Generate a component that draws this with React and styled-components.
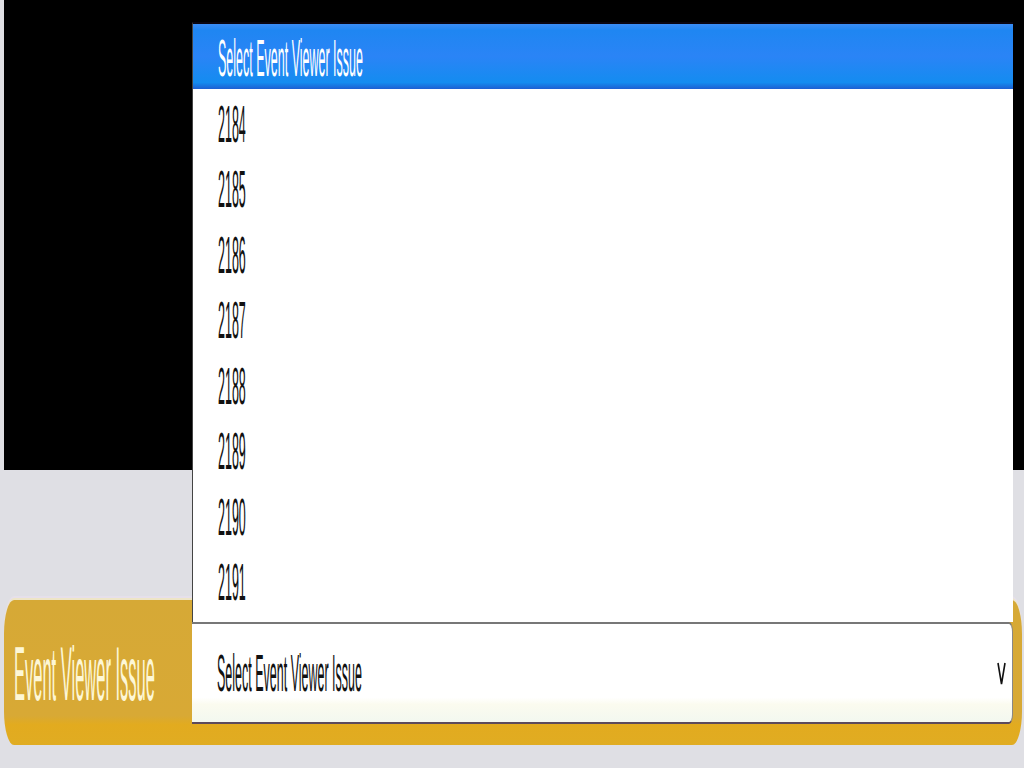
import React from 'react';
import styled, { createGlobalStyle } from 'styled-components';

const options = ['2184', '2185', '2186', '2187', '2188', '2189', '2190', '2191'];

const GlobalStyle = createGlobalStyle`
  html, body {
    margin: 0;
    padding: 0;
    background: #dfdfe4;
    font-family: "Liberation Sans", Arial, sans-serif;
  }
`;

const Page = styled.div`
  width: 1024px;
  height: 768px;
  overflow: hidden;
  background: #dfdfe4;
`;

const Screen = styled.div`
  height: 470px;
  margin-left: 4px;
  background: #000;
`;

const FieldBar = styled.div`
  display: flex;
  align-items: center;
  height: 145px;
  margin: 130px 2px 0 4px;
  background: linear-gradient(#d6a936 0%, #d8a935 80%, #e2ab1f 86%, #e0ac22 100%);
  border-radius: 10px / 34px;
  box-shadow: 0 -2px 0 #eee5c6, 0 -4px 0 #e6e0ea;
`;

const Label = styled.div`
  width: 188px;
  flex-shrink: 0;
  box-sizing: border-box;
  padding: 4px 0 0 10px;
  color: #fdf7d6;
  font-size: 16.5px;
  white-space: nowrap;
`;

const Stretch = styled.span`
  display: inline-block;
  transform: scaleY(${(p) => p.$scale || 4.2});
  transform-origin: center;
  white-space: nowrap;
`;

const SelectWrap = styled.div`
  position: relative;
  flex: 1;
  height: 102px;
  margin-right: 9px;
`;

const SelectBox = styled.div`
  display: flex;
  align-items: center;
  justify-content: space-between;
  box-sizing: border-box;
  height: 100%;
  padding: 3px 6px 0 25px;
  background: linear-gradient(#fff 0%, #fff 75%, #fbfbef 82%, #f3f8f0 100%);
  border-top: 2px solid #777;
  border-right: 1px solid #888;
  border-bottom: 2px solid #5c4a5c;
  border-radius: 0 4px 4px 0 / 0 10px 10px 0;
  color: #111;
  font-size: 12.5px;
`;

const OptionList = styled.div`
  position: absolute;
  left: 0;
  right: 0;
  bottom: 100%;
  height: 600px;
  box-sizing: border-box;
  border-top: 2px solid #0a0612;
  border-left: 1px solid #444;
  background: #fff;
  overflow: hidden;
`;

const OptionRow = styled.div`
  display: flex;
  align-items: center;
  box-sizing: border-box;
  height: 65.5px;
  padding: 6px 0 0 25px;
  font-size: 12.5px;
  color: ${(p) => (p.$active ? '#fff' : '#111')};
  background: ${(p) =>
    p.$active ? 'linear-gradient(#3b8df6 0%, #1f86f2 10%, #2a84f6 50%, #148cf0 90%, #1d5fd2 100%)' : '#fff'};
`;

const Chevron = () => (
  <svg width="9" height="26" viewBox="0 0 9 26">
    <path d="M1 2 L4.5 23 L8 2" fill="none" stroke="#111" strokeWidth="1.6" />
  </svg>
);

export default function App() {
  return (
    <Page>
      <GlobalStyle />
      <Screen />
      <FieldBar>
        <Label>
          <Stretch $scale={4.6}>Event Viewer Issue</Stretch>
        </Label>
        <SelectWrap>
          <OptionList>
            <OptionRow $active>
              <Stretch>Select Event Viewer Issue</Stretch>
            </OptionRow>
            {options.map((o) => (
              <OptionRow key={o}>
                <Stretch>{o}</Stretch>
              </OptionRow>
            ))}
          </OptionList>
          <SelectBox>
            <Stretch>Select Event Viewer Issue</Stretch>
            <Chevron />
          </SelectBox>
        </SelectWrap>
      </FieldBar>
    </Page>
  );
}
